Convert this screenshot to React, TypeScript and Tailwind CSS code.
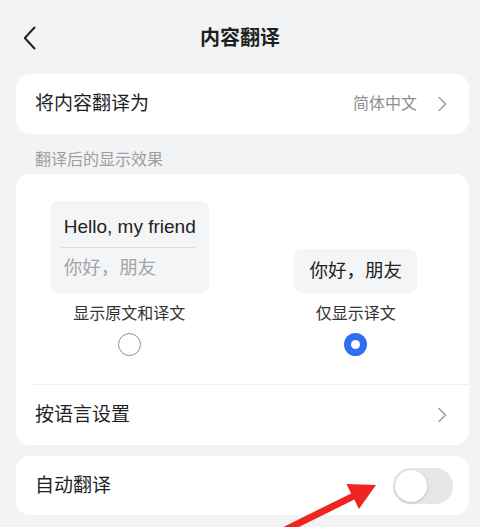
import React from 'react'

const FONT = '"Liberation Sans", "Noto Sans CJK SC", sans-serif'

function Chevron({ className = '' }: { className?: string }) {
  return (
    <svg width="10" height="16" viewBox="0 0 10 16" fill="none" className={className}>
      <path d="M2 1.5 L8.5 8 L2 14.5" stroke="#9b9ca0" strokeWidth="1.5" strokeLinecap="round" strokeLinejoin="round" />
    </svg>
  )
}

function Radio({ checked }: { checked: boolean }) {
  if (checked) {
    return (
      <div className="w-[23px] h-[23px] rounded-full bg-[#2f6df2] flex items-center justify-center">
        <div className="w-[9px] h-[9px] rounded-full bg-white" />
      </div>
    )
  }
  return <div className="w-[23px] h-[23px] rounded-full border-[1.5px] border-[#8e8e92] bg-white" />
}

export default function App() {
  return (
    <div
      className="relative w-[480px] h-[527px] overflow-hidden bg-[#f2f3f5] text-[#1f1f1f]"
      style={{ fontFamily: FONT }}
    >
      {/* header */}
      <div className="h-[74px] pt-[2px] pl-[23px] pr-[16px] flex items-center">
        <svg width="13" height="24" viewBox="0 0 13 24" fill="none">
          <path d="M11.5 1.5 L1.8 12 L11.5 22.5" stroke="#222" strokeWidth="2" strokeLinecap="round" strokeLinejoin="round" />
        </svg>
        <div className="flex-1 text-center text-[20px] font-bold leading-[26px]">内容翻译</div>
        <div className="w-[20px]" />
      </div>

      {/* target language */}
      <div className="ml-4 mr-[11px] h-[60px] rounded-[14px] bg-white flex items-center pl-[19px] pr-[22px]">
        <span className="flex-1 text-[19px] leading-[26px]">将内容翻译为</span>
        <span className="text-[16px] text-[#8d8e92] mr-[20px]">简体中文</span>
        <Chevron />
      </div>

      <div className="pt-[16px] pb-[4px] pl-[35px] text-[16px] leading-[20px] text-[#9d9fa3]">翻译后的显示效果</div>

      {/* display effect */}
      <div className="ml-4 mr-[11px] rounded-[14px] bg-white pt-[27px]">
        <div className="grid grid-cols-2 items-end">
          <div className="flex flex-col items-center">
            <div className="w-[159px] h-[92px] rounded-[8px] bg-[#f4f5f7] px-[11px] pt-[14px]">
              <div className="pl-[3px] text-[19px] leading-[24px] text-[#222]">Hello, my friend</div>
              <div className="mt-[8px] h-px bg-[#dcdde0] mr-[3px]" />
              <div className="mt-[8px] pl-[3px] text-[18.5px] leading-[24px] text-[#a3a4a8]">你好，朋友</div>
            </div>
            <div className="mt-[10px] text-[16px] leading-[22px] text-[#333]">显示原文和译文</div>
            <div className="mt-[8px]"><Radio checked={false} /></div>
          </div>
          <div className="flex flex-col items-center">
            <div className="w-[123px] h-[44px] rounded-[8px] bg-[#f4f5f7] flex items-center justify-center text-[18.5px] text-[#222]">
              你好，朋友
            </div>
            <div className="mt-[10px] text-[16px] leading-[22px] text-[#333]">仅显示译文</div>
            <div className="mt-[8px]"><Radio checked={true} /></div>
          </div>
        </div>
        <div className="mt-[28px] ml-[17px] h-px bg-[#eeeff1]" />
        <div className="h-[60px] flex items-center pl-[19px] pr-[22px]">
          <span className="flex-1 text-[19px] leading-[26px]">按语言设置</span>
          <Chevron />
        </div>
      </div>

      {/* auto translate */}
      <div className="ml-4 mr-[11px] mt-[11px] h-[59px] rounded-[14px] bg-white flex items-center pl-[19px] pr-[16px]">
        <span className="flex-1 text-[19px] leading-[26px]">自动翻译</span>
        <div className="w-[60px] h-[36px] rounded-full bg-[#e6e6e8] p-[2px] flex items-center">
          <div className="w-[32px] h-[32px] rounded-full bg-white shadow-[0_1px_3px_rgba(0,0,0,0.18)]" />
        </div>
      </div>

      {/* annotation arrow */}
      <svg className="absolute left-0 top-0 pointer-events-none" width="480" height="527" viewBox="0 0 480 527">
        <polygon
          points="283.4,526.9 351.1,493.4 346.5,484 376,485 358.9,509 354.3,499.6 286.6,533.1"
          fill="#ee2420"
          strokeLinejoin="round"
        />
      </svg>
    </div>
  )
}
